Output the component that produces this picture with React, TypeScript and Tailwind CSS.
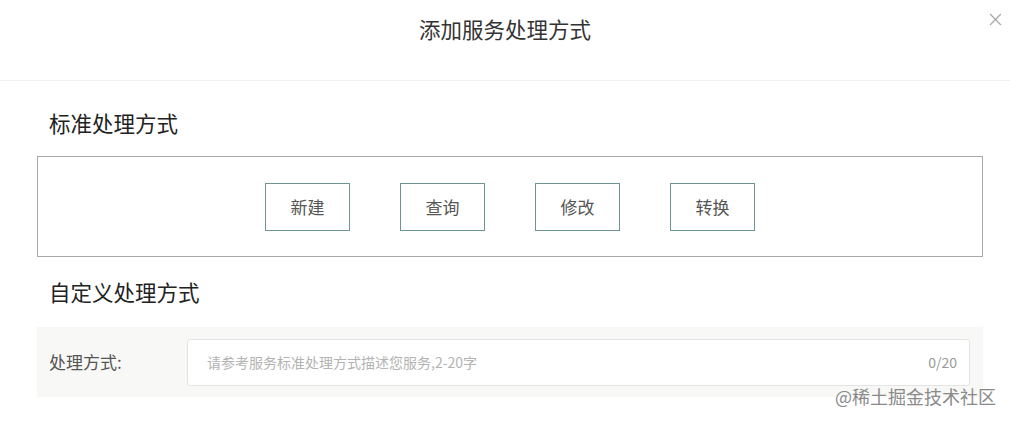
import React from "react";

export default function App() {
  const font = { fontFamily: '"Noto Sans CJK SC", "Noto Sans", sans-serif' };
  const buttons = ["新建", "查询", "修改", "转换"];
  return (
    <div className="relative w-[1010px] h-[421px] bg-white overflow-hidden" style={font}>
      <div className="h-[81px] border-b border-[#efefef] flex justify-center">
        <div className="pt-[14px] text-[21.5px] leading-[30px] text-[#333]">添加服务处理方式</div>
      </div>
      <button className="absolute top-[13px] right-[8px] w-[13px] h-[13px] text-[#aaa]">
        <svg viewBox="0 0 12 12" width="13" height="13" fill="none" stroke="currentColor" strokeWidth="1.2">
          <path d="M1 1L11 11M11 1L1 11" />
        </svg>
      </button>
      <div className="pl-[37px] pr-[27px]">
        <div className="mt-[27px] pl-[12px] text-[21.5px] leading-[30px] text-[#222]">标准处理方式</div>
        <div className="mt-[18px] h-[101px] border border-[#a9a9a9] flex items-center justify-center gap-[50px]">
          {buttons.map((b) => (
            <div
              key={b}
              className="w-[85px] h-[48px] border border-[#6f9494] flex items-center justify-center text-[17px] text-[#555]"
            >
              {b}
            </div>
          ))}
        </div>
        <div className="mt-[20px] pl-[12px] text-[21.5px] leading-[30px] text-[#222]">自定义处理方式</div>
        <div className="mt-[20px] h-[70px] bg-[#f8f8f6] flex items-center pl-[12px] pr-[13px]">
          <div className="w-[138px] text-[17px] text-[#555]">处理方式:</div>
          <div className="flex-1 h-[47px] bg-white border border-[#e4e4e4] rounded-[3px] flex items-center justify-between pl-[19px] pr-[12px]">
            <span className="text-[14px] text-[#b3b3b3]">请参考服务标准处理方式描述您服务,2-20字</span>
            <span className="text-[14px] text-[#999]">0/20</span>
          </div>
        </div>
      </div>
      <div className="absolute left-[835px] top-[384px] text-[18px] leading-[24px] text-[#8a8a8a]">@稀土掘金技术社区</div>
    </div>
  );
}
